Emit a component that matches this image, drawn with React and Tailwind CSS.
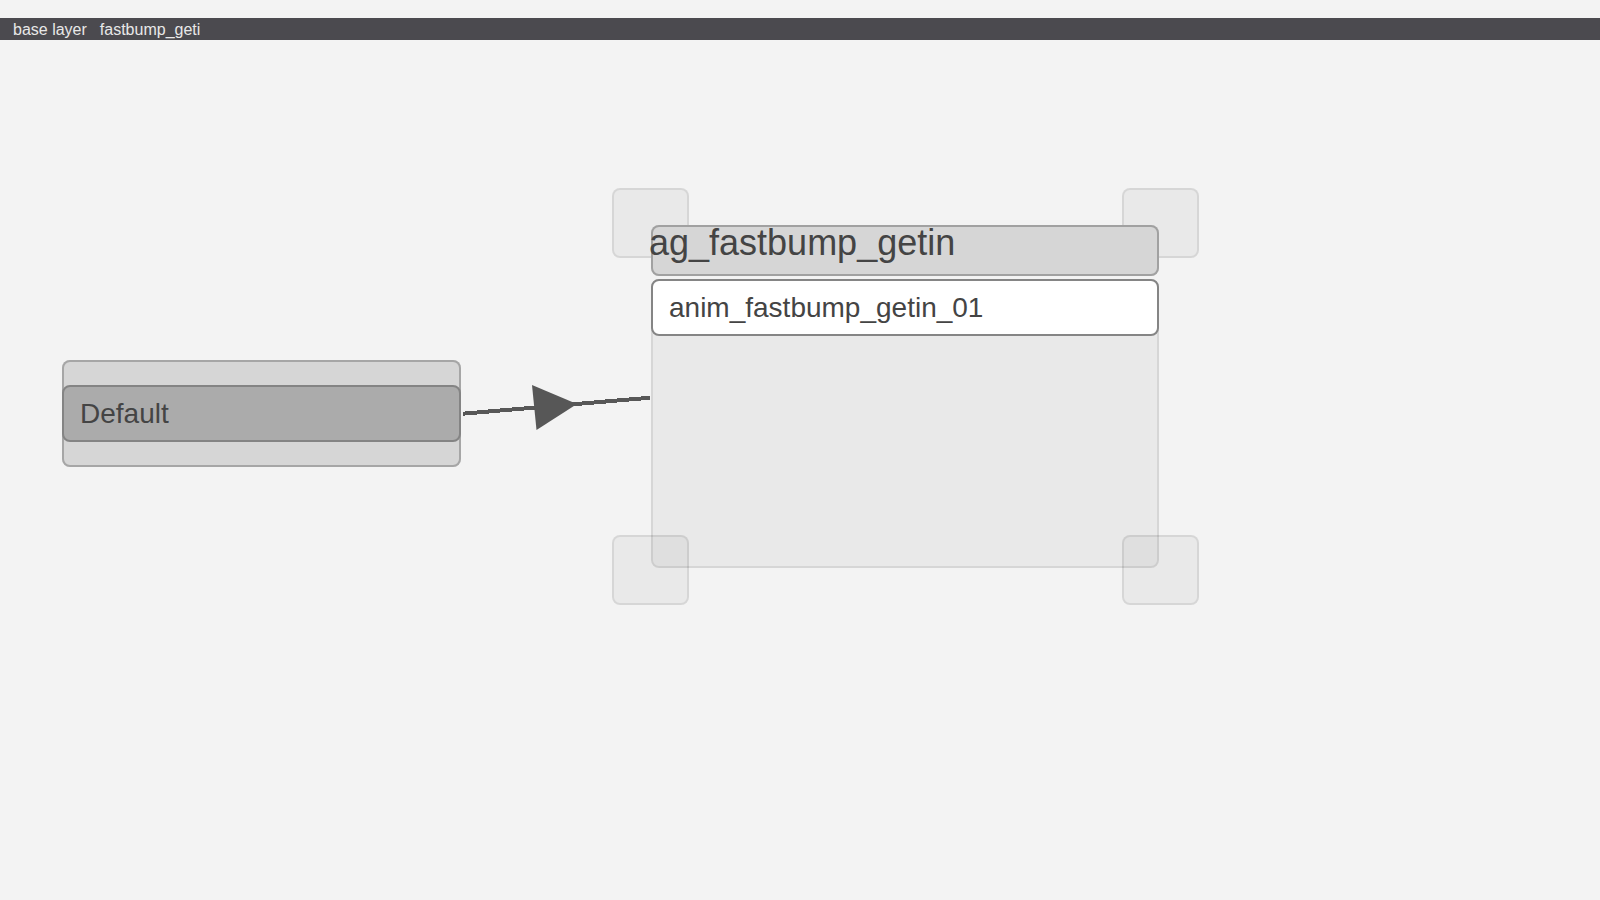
const topHandles = ['left-[612px] top-[188px]', 'left-[1122px] top-[188px]'];
const bottomHandles = ['left-[612px] top-[535px]', 'left-[1122px] top-[535px]'];

function ResizeHandle({ place }) {
  return (
    <div
      className={`absolute h-[70px] w-[77px] rounded-lg bg-black/4 inset-ring-2 inset-ring-black/8 ${place}`}
    />
  );
}

function DefaultNode() {
  return (
    <div className="absolute left-[62px] top-[360px] w-[399px] rounded-lg bg-[#d6d6d6] py-[25px] inset-ring-2 inset-ring-[#a6a6a6]">
      <div className="flex h-[57px] items-center rounded-lg border-2 border-[#848484] bg-[#ababab] px-4 text-[28px] leading-8 text-[#444444]">
        Default
      </div>
    </div>
  );
}

function Transition() {
  return (
    <svg
      className="absolute left-[460px] top-[380px]"
      width="190"
      height="54"
      viewBox="0 0 190 54"
      fill="#575757"
      aria-hidden="true"
    >
      <path
        d="M3 33.7 190 17.7"
        stroke="#575757"
        strokeWidth="4"
        shapeRendering="crispEdges"
      />
      <path d="M72 5 117 24 76.500 50Z" />
    </svg>
  );
}

function GroupNode() {
  return (
    <section className="absolute left-[651px] top-[225px] flex w-[508px] flex-col gap-[3px]">
      <h1 className="h-[51px] whitespace-nowrap rounded-lg bg-[#d6d6d6] text-4xl leading-9 text-[#444444] inset-ring-2 inset-ring-[#a1a1a1]">
        <span className="-ml-0.5">ag_fastbump_getin</span>
      </h1>
      <div className="h-[289px] rounded-lg bg-black/4 inset-ring-2 inset-ring-black/8">
        <div className="flex h-[57px] items-center rounded-lg border-2 border-[#858585] bg-white px-4 text-[28px] leading-8 text-[#444444]">
          anim_fastbump_getin_01
        </div>
      </div>
    </section>
  );
}

export default function App() {
  return (
    <div className="flex min-h-screen flex-col bg-[#f3f3f3] pt-[18px] font-['Liberation_Sans',Arial,sans-serif]">
      <nav
        aria-label="Layers"
        className="flex h-[22px] items-end gap-[13px] bg-[#4b4a4f] px-[13px] text-base leading-5 text-[#e8e8e8]"
      >
        <a href="#base-layer">base layer</a>
        <a href="#fastbump-getin">fastbump_geti</a>
      </nav>
      <main className="flex-1">
        {topHandles.map((place) => (
          <ResizeHandle key={place} place={place} />
        ))}
        <DefaultNode />
        <Transition />
        <GroupNode />
        {bottomHandles.map((place) => (
          <ResizeHandle key={place} place={place} />
        ))}
      </main>
    </div>
  );
}
